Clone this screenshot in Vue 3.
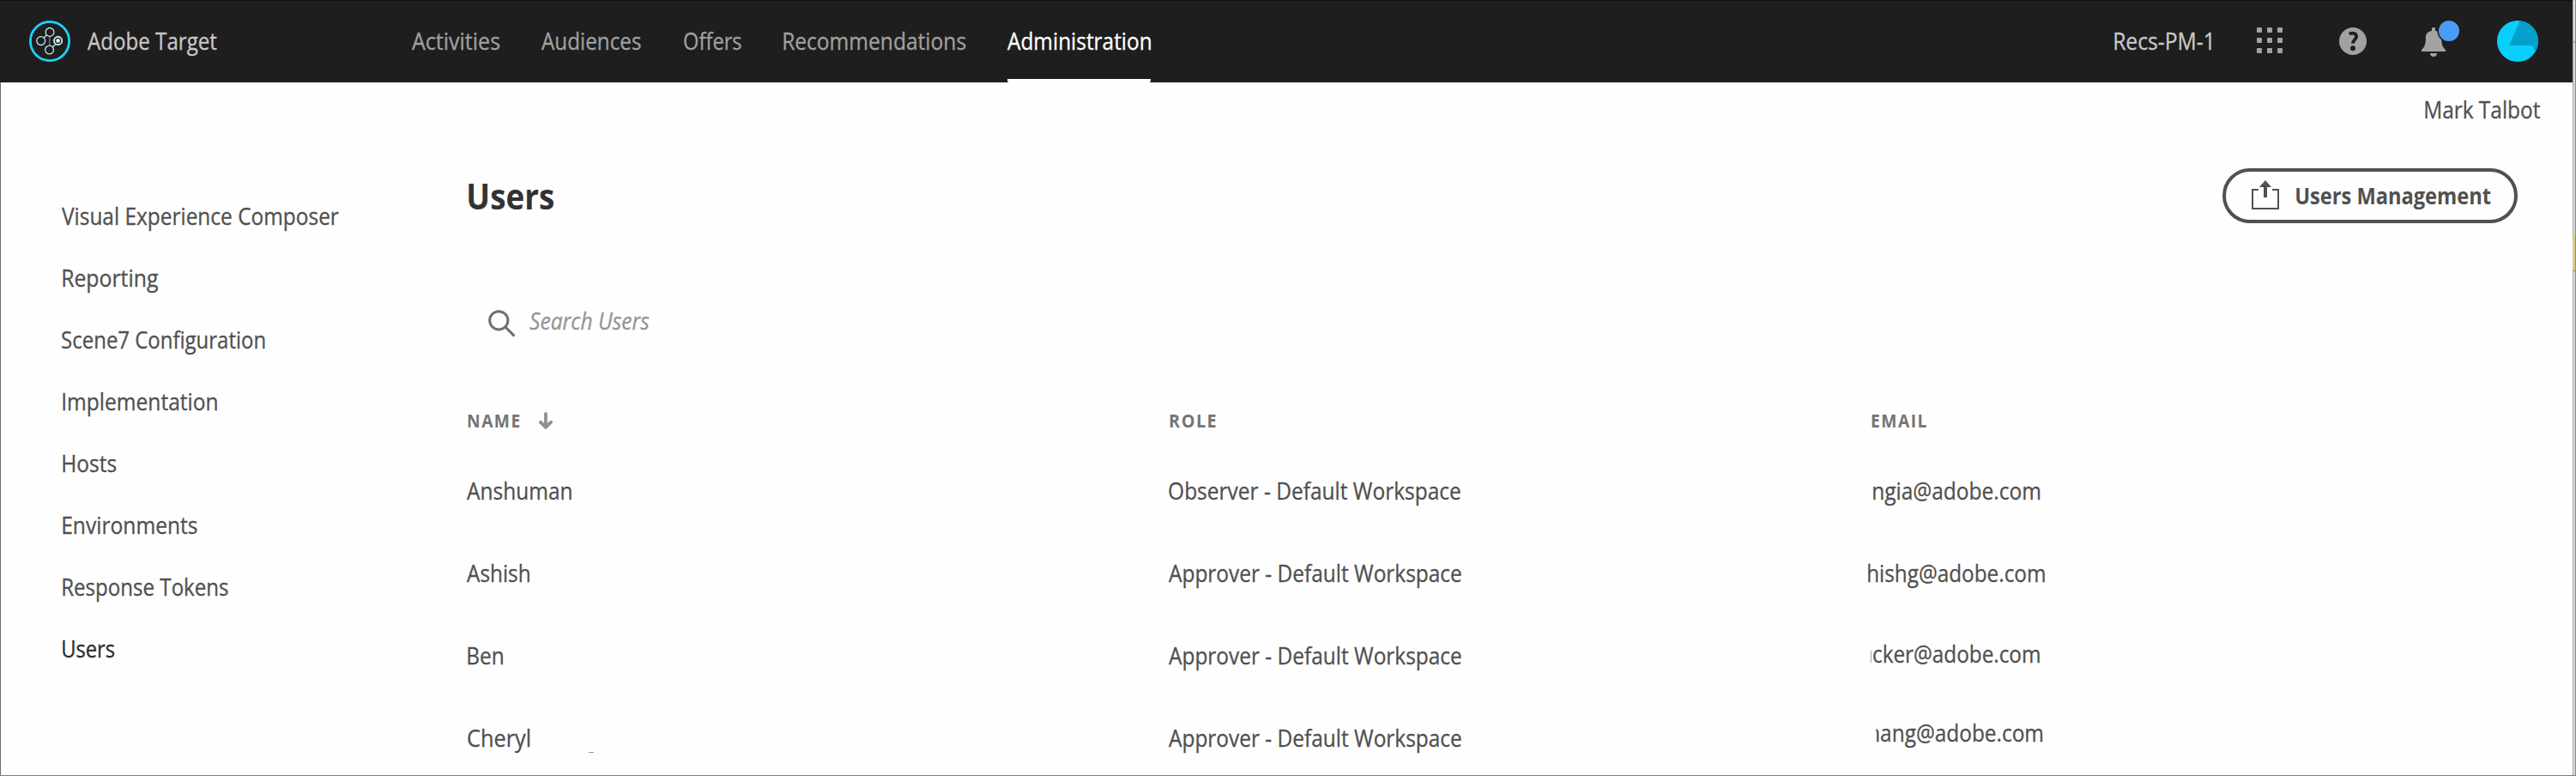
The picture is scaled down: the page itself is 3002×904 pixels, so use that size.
<script setup>
const nav = [
  { label: 'Activities', w: 102.5, gap: 48.5 },
  { label: 'Audiences', w: 116, gap: 49.5 },
  { label: 'Offers', w: 67, gap: 49.5 },
  { label: 'Recommendations', w: 212.5, gap: 48 },
  { label: 'Administration', w: 167.5, gap: 0, active: true }
]
const side = [
  { label: 'Visual Experience Composer', w: 323, flush: true },
  { label: 'Reporting', w: 111 },
  { label: 'Scene7 Configuration', w: 237, flush: true },
  { label: 'Implementation', w: 180.5 },
  { label: 'Hosts', w: 62.5 },
  { label: 'Environments', w: 157 },
  { label: 'Response Tokens', w: 193 },
  { label: 'Users', w: 60.5, active: true }
]
const rows = [
  { name: 'Anshuman', nw: 122.5, role: 'Observer - Default Workspace', rw: 340, mail: 'ngia@adobe.com', mw: 194.5, cls: 'm1' },
  { name: 'Ashish', nw: 73.5, role: 'Approver - Default Workspace', rw: 341, mail: 'hishg@adobe.com', mw: 206, cls: 'm2' },
  { name: 'Ben', nw: 41.5, role: 'Approver - Default Workspace', rw: 341, mail: 'cker@adobe.com', mw: 194, cls: 'm3', inset: true },
  { name: 'Cheryl', nw: 72.5, role: 'Approver - Default Workspace', rw: 341, mail: 'hang@adobe.com', mw: 202.5, cls: 'm4', inset: true }
]
const cells = [0, 12, 24]

// Condenses a label horizontally so that its glyphs span the given width.
const vFit = {
  mounted(el, { value }) {
    const cs = getComputedStyle(el)
    const ctx = document.createElement('canvas').getContext('2d')
    ctx.font = `${cs.fontStyle} ${cs.fontWeight} ${cs.fontSize} ${cs.fontFamily}`
    if (cs.letterSpacing !== 'normal') ctx.letterSpacing = cs.letterSpacing
    const m = ctx.measureText(el.textContent)
    const scale = value / (m.actualBoundingBoxLeft + m.actualBoundingBoxRight)
    el.style.width = `${value}px`
    el.style.transform = `translateX(${m.actualBoundingBoxLeft * scale}px) scaleX(${scale})`
  }
}
</script>

<template>
  <div class="page">
    <header class="bar">
      <svg class="logo" viewBox="0 0 48 48">
        <circle cx="24" cy="24" r="22.6" fill="none" stroke="#1bd2fb" stroke-width="2.8" />
        <g fill="none" stroke="#bfe9f5" stroke-width="1.3">
          <path d="M20.2 17 17 20.2M31 27.4 27.4 30.6" />
          <path d="M23.9 18.5V29" stroke="#72878d" />
          <circle cx="24" cy="13.4" r="4.9" />
          <circle cx="13.7" cy="23.6" r="4.9" />
          <circle cx="23.6" cy="34" r="4.9" />
          <circle cx="33.6" cy="23.4" r="4.6" stroke-width="1.9" />
        </g>
        <circle cx="33.6" cy="23.4" r="2.3" fill="#e8f8fd" />
      </svg>
      <span v-fit="150.5" class="t product">Adobe Target</span>
      <nav class="nav">
        <a v-for="n in nav" :key="n.label" class="tab" :class="{ active: n.active }" :style="{ marginRight: n.gap + 'px' }">
          <span v-fit="n.w" class="t">{{ n.label }}</span>
        </a>
      </nav>
      <div class="tools">
        <span v-fit="113" class="t org">Recs-PM-1</span>
        <svg class="grid" viewBox="0 0 30 30" fill="#a2a2a2">
          <template v-for="y in cells" :key="y">
            <rect v-for="x in cells" :key="x" :x="x" :y="y" width="6" height="6" rx="1" />
          </template>
        </svg>
        <svg class="help" viewBox="0 0 32 32">
          <circle cx="16" cy="16" r="16" fill="#a2a2a2" />
          <path d="M11.8 7.7C16 5.4 20.2 7 20.1 10.6 20 14.2 15.9 14.6 16 18.6" fill="none" stroke="#1e1e1e" stroke-width="3.8" />
          <circle cx="16" cy="24.2" r="3" fill="#1e1e1e" />
        </svg>
        <svg class="bell" viewBox="0 0 46 48">
          <path d="M12 9a1 1 0 0 1 1-1h2a1 1 0 0 1 1 1V12C21 12.6 23.2 15.5 23.2 20.5 23.2 28 25 31.5 28 34V36H0V34C3.4 31 4.8 28 4.8 20.5 4.8 15.5 7 12.6 12 12ZM10 38h8a4 4 0 0 1-8 0Z" fill="#a2a2a2" />
          <circle cx="32" cy="12" r="13.6" fill="#1e1e1e" />
          <circle cx="32" cy="12" r="12" fill="#4b9cf8" />
        </svg>
        <svg class="avatar" viewBox="0 0 48 48">
          <circle cx="24" cy="24" r="24" fill="#09cfff" />
          <path d="M26.5 0.2A24 24 0 0 1 44.6 36.2L41 29H14Z" fill="#03a1c9" />
        </svg>
      </div>
    </header>

    <div class="account"><span v-fit="134" class="t">Mark Talbot</span></div>

    <div class="body">
      <aside class="side">
        <a v-for="s in side" :key="s.label" class="link" :class="{ active: s.active, flush: s.flush }"><span v-fit="s.w" class="t">{{ s.label }}</span></a>
      </aside>
      <main class="main">
        <div class="head">
          <h1><span v-fit="99" class="t">Users</span></h1>
          <button class="btn">
            <svg class="share" viewBox="0 0 32 34">
              <path d="M8 11H1V33H31V11H24" fill="none" stroke="#505050" stroke-width="2" />
              <path d="M16 0 23 8H18V20H14V8H9Z" fill="#505050" />
            </svg>
            <span v-fit="226.5" class="t">Users Management</span>
          </button>
        </div>
        <div class="search">
          <svg class="lens" viewBox="0 0 32 32" fill="none" stroke="#707070" stroke-width="3">
            <circle cx="12.3" cy="12.3" r="10.6" />
            <path d="M20 20 29.6 29.6" stroke-linecap="round" />
          </svg>
          <span v-fit="139.5" class="t">Search Users</span>
        </div>
        <div class="row cols">
          <div class="cell">
            <span v-fit="60.5" class="t">NAME</span>
            <svg class="sort" viewBox="0 0 16 20" fill="none" stroke="#909090" stroke-width="3.8" stroke-linecap="round" stroke-linejoin="round">
              <path d="M8 2V17M2 11.8 8 17.8 14 11.8" />
            </svg>
          </div>
          <div class="cell"><span v-fit="54" class="t">ROLE</span></div>
          <div class="cell"><span v-fit="64.5" class="t">EMAIL</span></div>
        </div>
        <div v-for="r in rows" :key="r.name" class="row">
          <div class="cell" :class="{ inset: r.inset }"><span v-fit="r.nw" class="t">{{ r.name }}</span></div>
          <div class="cell"><span v-fit="r.rw" class="t">{{ r.role }}</span></div>
          <div class="cell">
            <div class="mail" :class="r.cls"><span v-fit="r.mw" class="t">{{ r.mail }}</span></div>
          </div>
        </div>
      </main>
    </div>
    <i class="speck"></i>
    <div class="edge"><i class="mark"></i></div>
  </div>
</template>

<style>
body { margin: 0; }
</style>

<style scoped>
.page {
  position: relative;
  box-sizing: border-box;
  width: 3002px;
  height: 904px;
  overflow: hidden;
  background: #fefefe;
  color: #505050;
  font: 26.5px/1 "Open Sans", "Noto Sans", sans-serif;
  -webkit-text-stroke: 0.3px currentColor;
  border-bottom: 1px solid #7c7c7c;
}
.page::before {
  content: "";
  position: absolute;
  left: 0;
  top: 96px;
  bottom: 0;
  width: 1px;
  background: #6c6c6c;
}
.t { display: block; white-space: nowrap; transform-origin: 0 50%; flex: none; }
.bar {
  display: flex;
  align-items: center;
  box-sizing: border-box;
  width: 2998px;
  height: 96px;
  padding-left: 34px;
  background: #1e1e1e;
  box-shadow: inset 0 1px #101010;
  line-height: 97px;
}
.logo { width: 48px; height: 48px; flex: none; }
.product { margin-left: 19.8px; color: #c8c8c8; }
.nav { display: flex; margin-left: 228.2px; color: #a0a0a0; }
.tab { height: 96px; box-sizing: border-box; }
.tab.active { color: #fff; border-bottom: 4px solid #fff; border-radius: 2px; }
.tools { display: flex; align-items: center; margin-left: auto; padding-right: 40px; }
.org { color: #c8c8c8; margin-right: 53px; }
.grid { width: 30px; height: 30px; margin: -2px 66px 0 0; }
.help { width: 32px; height: 32px; margin-right: 64px; }
.bell { width: 46px; height: 48px; margin-right: 42px; }
.avatar { width: 48px; height: 48px; }
.account { display: flex; justify-content: flex-end; padding-right: 42px; line-height: 64px; }
.body { display: flex; padding-top: 36px; }
.side { width: 471px; flex: none; padding: 20.4px 0 0 73px; line-height: 72px; }
.link { display: block; }
.link.flush { margin-left: -0.8px; }
.link.active { color: #2c2c2c; }
.main { flex: 1; padding-right: 68px; }
.head { display: flex; justify-content: space-between; line-height: 64px; -webkit-text-stroke: 0; }
h1 { margin: 0; padding-left: 2.4px; font-size: 41px; font-weight: 700; color: #323232; }
.btn {
  display: flex;
  align-items: center;
  box-sizing: border-box;
  width: 344px;
  height: 64px;
  padding: 0 0 0 30px;
  border: 4px solid #505050;
  border-radius: 32px;
  background: transparent;
  color: #505050;
  font: 700 26.5px/56px "Open Sans", "Noto Sans", sans-serif;
}
.share { width: 32px; height: 34px; margin: -2px 19.5px 0 0; flex: none; }
.search {
  display: flex;
  align-items: center;
  margin-top: 82px;
  padding-left: 25px;
  line-height: 65px;
  height: 64px;
  font-style: italic;
  color: #959595;
}
.lens { width: 32px; height: 32px; margin: 5px 16px 0 0; }
.row { display: grid; grid-template-columns: 818px 818px 1fr; line-height: 96px; height: 96px; }
.cols {
  margin: 60px 0 10px;
  height: 48px;
  line-height: 48px;
  font-size: 21px;
  font-weight: 700;
  letter-spacing: 1.6px;
  color: #747474;
  -webkit-text-stroke: 0;
}
.cell { display: flex; align-items: center; padding-left: 0.4px; }
.cols .cell { padding-left: 1px; }
.cell.inset { padding-left: 1.2px; }
.sort { width: 16px; height: 20px; margin-left: 22.5px; }
.mail { position: relative; }
.m1 { margin-left: 3px; }
.m2 { margin-left: -3px; }
.m3 { margin: -4px 0 0 3px; }
.m3::before {
  content: "";
  position: absolute;
  left: -3px;
  top: 44px;
  width: 1px;
  height: 14px;
  background: #a8a8a8;
}
.m4 { margin: -12px 0 0 -2.5px; clip-path: inset(0 -4px 0 8.5px); }
.speck { position: absolute; left: 686px; top: 876px; width: 6px; height: 1px; background: #999; }
.edge {
  position: absolute;
  right: 0;
  top: 0;
  width: 4px;
  height: 904px;
  box-sizing: border-box;
  background: linear-gradient(#dedede 48px, #9a9a9a 48px 50px, #d8d8d8 50px);
  border-left: 1px solid #a9a9a9;
  border-right: 1px solid #8a8a8a;
}
.mark { position: absolute; left: -1px; top: 273px; width: 3px; height: 42px; background: #d6c896; border-bottom: 1px solid #a08c50; }
</style>
